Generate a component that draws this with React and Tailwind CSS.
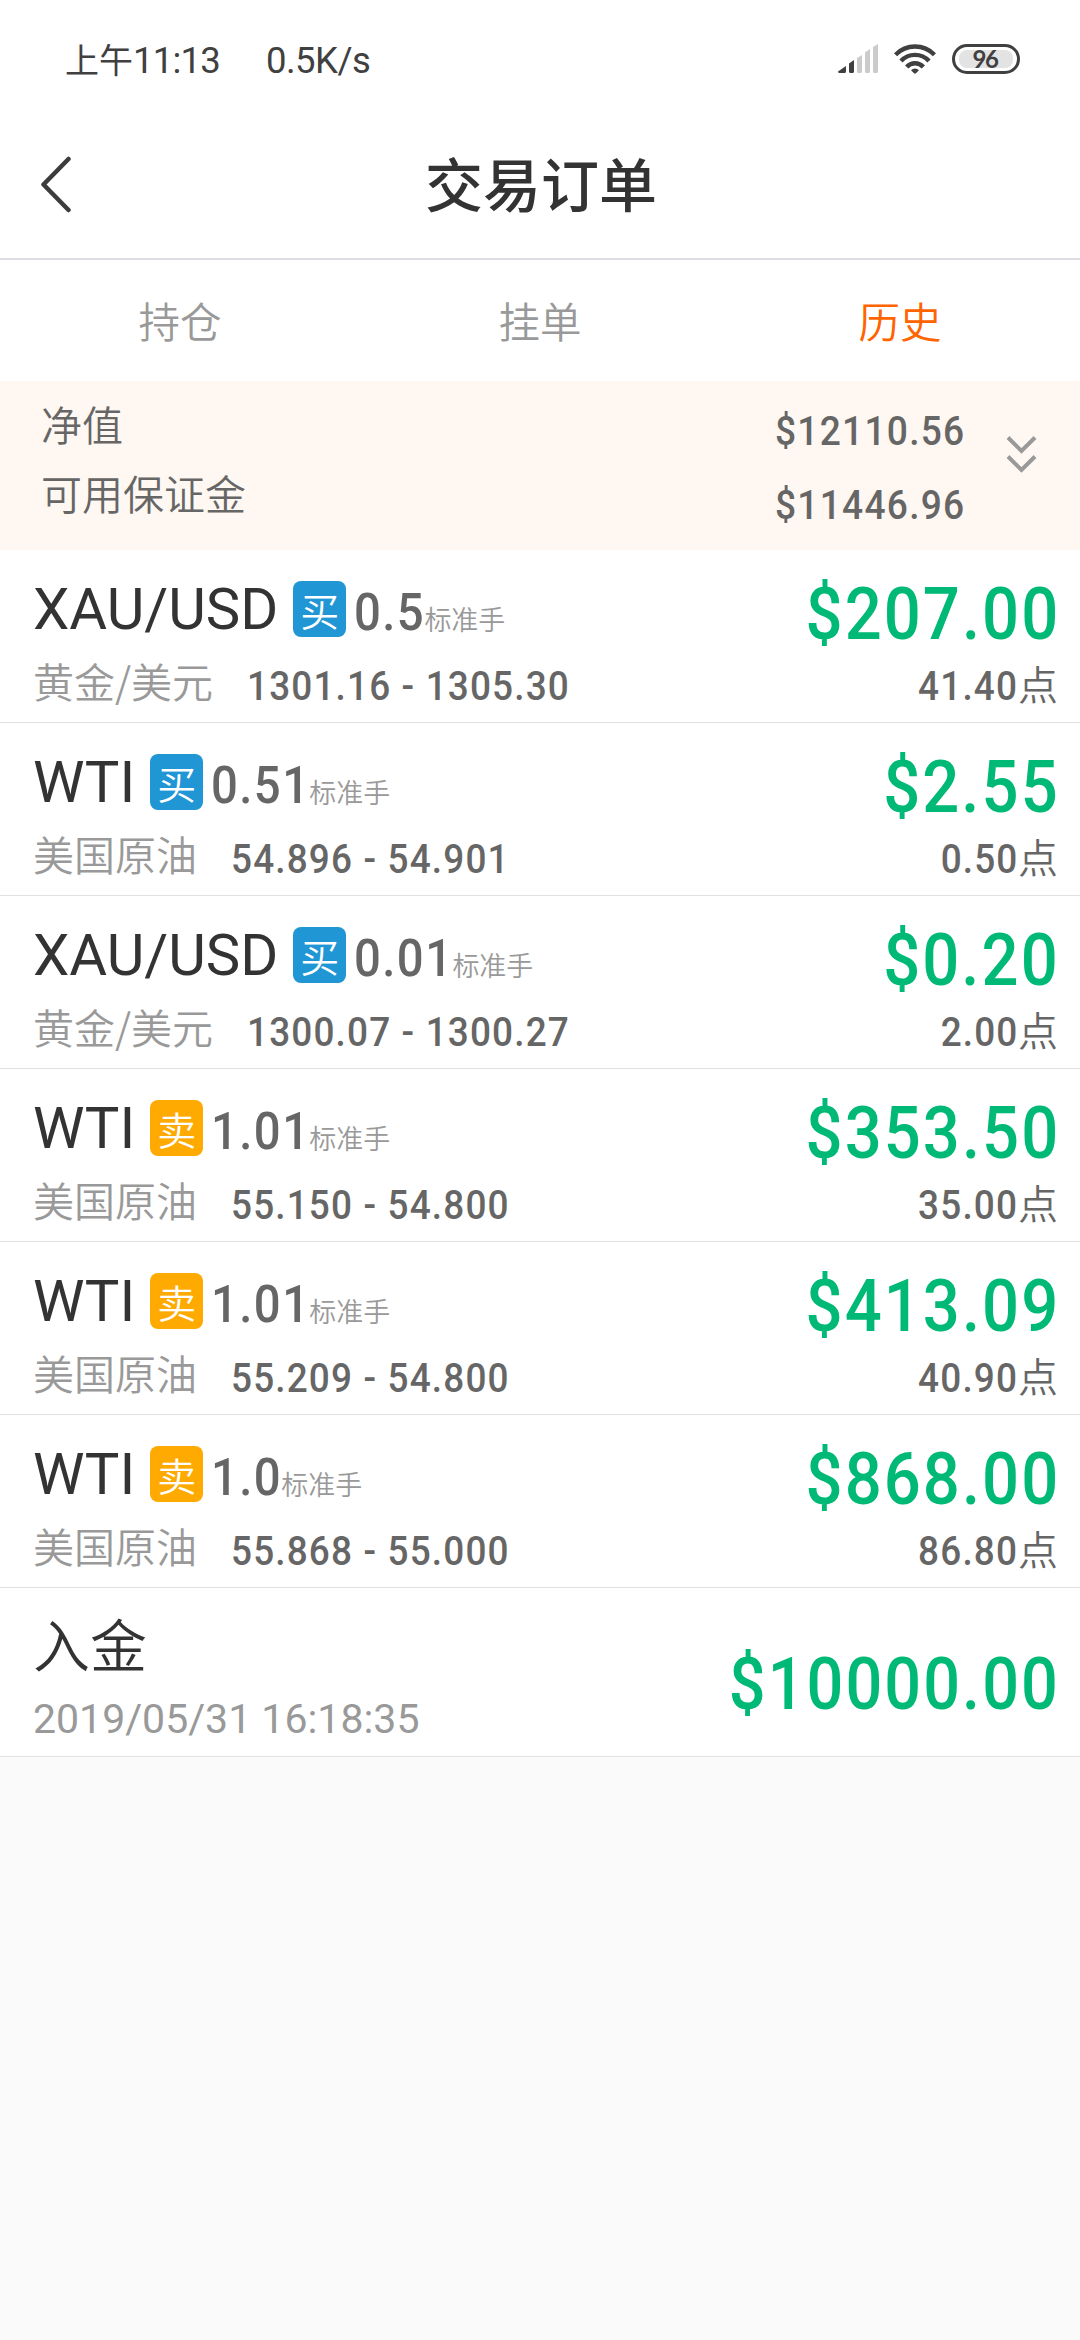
const CJK = "font-['Noto_Sans_CJK_SC',sans-serif]";
const NUM = "font-['Roboto','Noto_Sans_CJK_SC',sans-serif] font-medium whitespace-nowrap";

const orders = [
  { name: "XAU/USD", side: "买", lot: "0.5", lotWidth: "w-[70px]", label: "黄金/美元", price: "1301.16 - 1305.30", amount: "$207.00", points: "41.40" },
  { name: "WTI", side: "买", lot: "0.51", lotWidth: "w-[98px]", label: "美国原油", price: "54.896 - 54.901", amount: "$2.55", points: "0.50" },
  { name: "XAU/USD", side: "买", lot: "0.01", lotWidth: "w-[98px]", label: "黄金/美元", price: "1300.07 - 1300.27", amount: "$0.20", points: "2.00" },
  { name: "WTI", side: "卖", lot: "1.01", lotWidth: "w-[98px]", label: "美国原油", price: "55.150 - 54.800", amount: "$353.50", points: "35.00" },
  { name: "WTI", side: "卖", lot: "1.01", lotWidth: "w-[98px]", label: "美国原油", price: "55.209 - 54.800", amount: "$413.09", points: "40.90" },
  { name: "WTI", side: "卖", lot: "1.0", lotWidth: "w-[70px]", label: "美国原油", price: "55.868 - 55.000", amount: "$868.00", points: "86.80" },
];

function StatusBar() {
  return (
    <div className="flex h-[118px] items-center justify-between pl-[65px] pr-[60px] text-[#404040]">
      <div className="flex items-center gap-[46px] whitespace-nowrap pt-[3px] font-['Roboto','Noto_Sans_CJK_SC',sans-serif] text-[36.500px] leading-[44px]">
        <span className="flex tracking-[-0.8px]">
          <span className="text-[34px] tracking-normal">上午</span>11:13
        </span>
        <span className="tracking-[-0.500px]">0.5K/s</span>
      </div>
      <div className="flex items-center gap-[16px]">
        <svg width="40" height="30" viewBox="0 0 40 30">
          <path d="M0 27.5 8 22v5.500a1.500 1.500 0 0 1-1.500 1.500h-5A1.500 1.500 0 0 1 0 27.500z" fill="#404040" />
          <path d="M11 19.500 16 16v11.500a1.500 1.500 0 0 1-1.500 1.500h-2a1.500 1.500 0 0 1-1.500-1.500z" fill="#404040" />
          <path d="M19 14 24 11v16.500a1.500 1.500 0 0 1-1.500 1.500h-2a1.500 1.500 0 0 1-1.500-1.500zM27 8.500 32 5v22.500a1.500 1.500 0 0 1-1.500 1.500h-2a1.500 1.500 0 0 1-1.500-1.500zM35 3 40 0v27.500a1.500 1.500 0 0 1-1.500 1.500h-2a1.500 1.500 0 0 1-1.500-1.500z" fill="#cbcbcb" />
        </svg>
        <svg width="42" height="30" viewBox="0 0 42 30" fill="none" stroke="#404040" strokeWidth="4.400">
          <path d="M1.500 10.800a27 27 0 0 1 39 0" />
          <path d="M7 17a19 19 0 0 1 28 0" />
          <path d="M12.700 23a11 11 0 0 1 16.600 0" />
          <path d="M17 26.200a5.300 5.300 0 0 1 8 0l-3 3a1.500 1.500 0 0 1-2 0z" fill="#404040" stroke="none" />
        </svg>
        <div className="flex h-[30px] w-[68px] items-center rounded-full border-[3px] border-[#404040] p-[4px]">
          <div className="flex h-[18px] w-[54px] items-center justify-center rounded-[8px] bg-[#e3e3e3] pr-[2px] font-['Lato',sans-serif] text-[24px] font-bold leading-none tracking-[-1.500px]">
            96
          </div>
        </div>
      </div>
    </div>
  );
}

function Header() {
  return (
    <div className="grid h-[142px] grid-cols-3 items-center border-b-2 border-[#dcdce3]">
      <svg className="mb-[6px] ml-[40px]" width="32" height="58" viewBox="0 0 32 58" fill="none" stroke="#3c3c3c" strokeWidth="4.500" strokeLinecap="round" strokeLinejoin="round">
        <path d="M28.500 3 3.500 28.500 28.500 54" />
      </svg>
      <h1 className={CJK + " whitespace-nowrap pb-[12px] pl-[2px] text-center text-[58px] font-medium leading-[60px] text-[#333]"}>交易订单</h1>
    </div>
  );
}

function Tabs() {
  return (
    <div className={CJK + " grid h-[121px] grid-cols-3 pt-[31px] text-center text-[41.500px] font-[350] leading-[58px] text-[#999]"}>
      <span>持仓</span>
      <span>挂单</span>
      <span className="text-[#ff6400]">历史</span>
    </div>
  );
}

function Summary() {
  return (
    <div className="flex h-[169px] bg-[#fff8f2] pl-[41px] pr-[43px] text-[#666]">
      <div className={CJK + " flex flex-col pt-[8px] text-[41px] font-[350] leading-[69px]"}>
        <span>净值</span>
        <span>可用保证金</span>
      </div>
      <div className={NUM + " ml-auto flex origin-right scale-x-[0.905] flex-col pt-[13px] text-right text-[41px] leading-[74px] tracking-[1.400px]"}>
        <span>$12110.56</span>
        <span>$11446.96</span>
      </div>
      <svg className="ml-[41px] mt-[54px]" width="31" height="38" viewBox="0 0 31 38" fill="none" stroke="#999" strokeWidth="4">
        <path d="M2 2.500 15.500 16 29 2.500M2 21.500 15.500 35 29 21.500" />
      </svg>
    </div>
  );
}

function OrderRow({ order }) {
  return (
    <div className="flex h-[173px] justify-between border-b border-[#e1e1e4] bg-white pl-[33px] pr-[22px]">
      <div className="pt-[31px]">
        <div className="flex h-[56px] items-center">
          <span className="font-['Roboto',sans-serif] text-[58px] leading-[56px] text-[#333]">{order.name}</span>
          <span className={CJK + " ml-[15px] flex h-[56px] w-[53px] justify-center rounded-[8px] text-[39px] font-[350] leading-[56px] text-white " + (order.side === "买" ? "bg-[#2196d5]" : "bg-[#ffaa00]")}>
            {order.side}
          </span>
          <span className={"ml-[8px] pt-[5px] " + order.lotWidth}>
            <span className={NUM + " block origin-left scale-x-[0.9] text-[52.500px] leading-[56px] tracking-[1.600px] text-[#666]"}>{order.lot}</span>
          </span>
          <span className={CJK + " pt-[20px] text-[27px] font-[350] leading-[40px] text-[#999]"}>标准手</span>
        </div>
        <div className="mt-[22px] flex h-[50px] items-center">
          <span className={CJK + " whitespace-nowrap pb-[8px] text-[41px] font-[350] leading-[50px] text-[#999]"}>{order.label}</span>
          <span className={NUM + " ml-[34px] origin-left scale-x-[0.9] pt-[3px] text-[41px] leading-[50px] tracking-[1.300px] text-[#666]"}>{order.price}</span>
        </div>
      </div>
      <div className="flex flex-col items-end pt-[33px]">
        <span className={NUM + " -mr-[2px] origin-right scale-x-[0.893] text-[73px] leading-[62px] tracking-[2.300px] text-[#00b976]"}>{order.amount}</span>
        <span className="mt-[13px] flex items-center leading-[50px] text-[#666]">
          <span className={NUM + " origin-right scale-x-[0.9] text-[41px] tracking-[1.300px]"}>{order.points}</span>
          <span className={CJK + " pb-[5px] text-[40px] font-[350]"}>点</span>
        </span>
      </div>
    </div>
  );
}

function DepositRow() {
  return (
    <div className="flex h-[169px] justify-between border-b border-[#e1e1e4] bg-white pl-[33px] pr-[22px]">
      <div className="flex flex-col pt-[22px]">
        <span className={CJK + " text-[57px] font-[350] leading-[64px] text-[#333]"}>入金</span>
        <span className="mt-[20px] font-['Roboto',sans-serif] text-[41px] leading-[50px] text-[#999]">2019/05/31 16:18:35</span>
      </div>
      <span className={NUM + " -mr-[2px] mt-[65px] origin-right scale-x-[0.888] text-[73px] leading-[62px] tracking-[2.300px] text-[#00b976]"}>$10000.00</span>
    </div>
  );
}

export default function App() {
  return (
    <div className="flex h-[2340px] w-[1080px] flex-col overflow-hidden bg-[#fafafa]">
      <div className="bg-white">
        <StatusBar />
        <Header />
        <Tabs />
      </div>
      <Summary />
      {orders.map((order, i) => (
        <OrderRow key={i} order={order} />
      ))}
      <DepositRow />
    </div>
  );
}
